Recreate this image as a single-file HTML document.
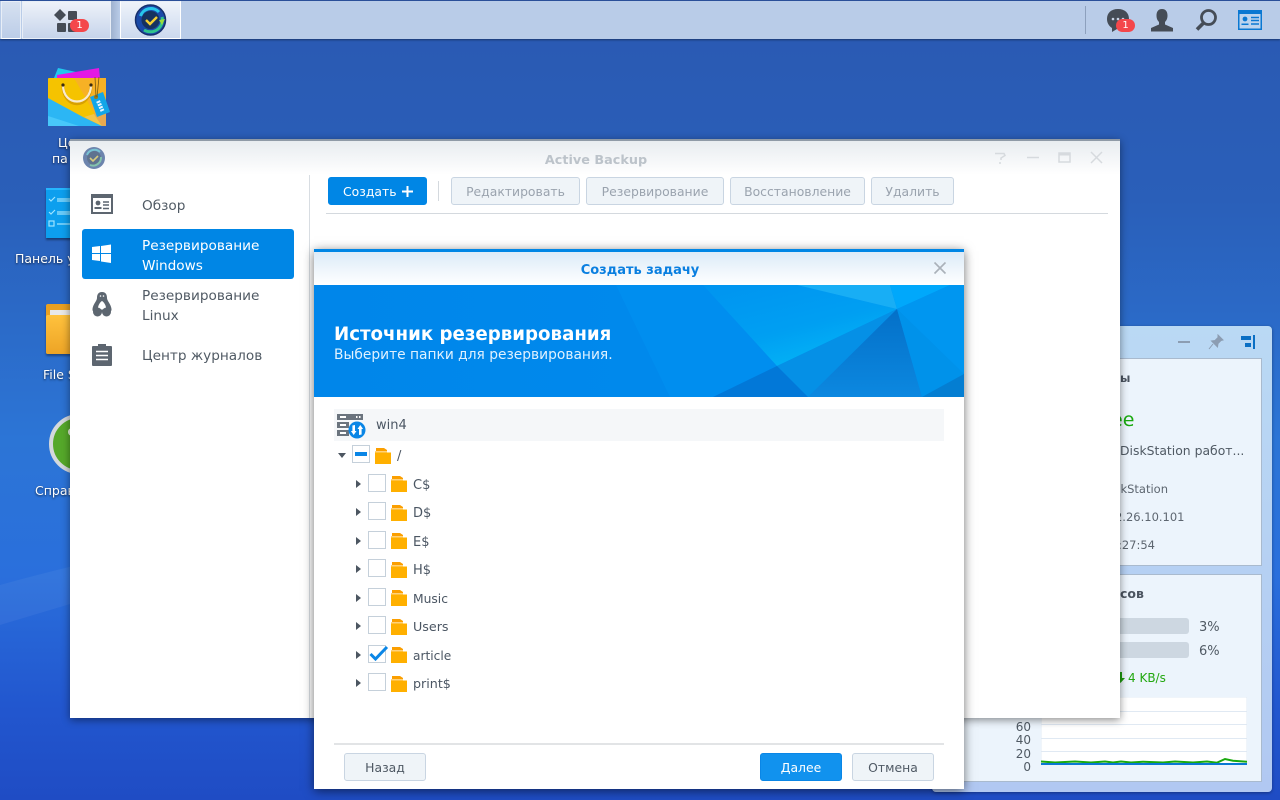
<!DOCTYPE html>
<html><head><meta charset="utf-8"><style>
*{box-sizing:border-box}
html,body{margin:0;padding:0;width:1280px;height:800px;overflow:hidden}
body{position:relative;font-family:"DejaVu Sans","Liberation Sans",sans-serif;background:linear-gradient(180deg,#2a59b2 0,#2a5fb9 25%,#2c75d6 55%,#2a6fdc 72%,#2257cf 88%,#1f4cc4 100%)}
.a{position:absolute}
.t{position:absolute;white-space:nowrap}
svg{position:absolute;display:block}
.btn{position:absolute;top:177px;height:28px;border:1px solid #c9d5e2;border-radius:3px;background:#eff4f8;color:#9aa3ae;font-size:12.4px;line-height:28px;text-align:center;white-space:nowrap}
.dt{color:#fff;font-size:12.5px;text-shadow:0 1px 2px rgba(0,0,0,.7)}
.nav{position:absolute;left:142px;font-size:13.65px;line-height:20px;color:#505a64;white-space:nowrap}
.cb{position:absolute;left:368px;width:18px;height:18px;border:1.5px solid #c5d0da;background:#fff}
.tri{position:absolute;left:356px;width:0;height:0;margin-top:1px;border-left:5px solid #4c5661;border-top:4.5px solid transparent;border-bottom:4.5px solid transparent}
.lab{position:absolute;left:413px;font-size:13px;color:#4b5663;line-height:16px;white-space:nowrap}
.w{position:absolute;color:#505a64;white-space:nowrap}
</style></head><body>

<svg style="left:0;top:0" width="1280" height="800"><path d="M0 585 Q200 530 300 535 L0 625Z" fill="#fff" opacity=".05"/></svg>

<!-- desktop icons -->
<svg style="left:44px;top:64px" width="68" height="68" viewBox="0 0 68 68">
<path d="M10 14 L14 4 L50 12 L50 14Z" fill="#22c8ee"/><path d="M13 11 L55 4 L56 14 L13 14Z" fill="#e418e4"/>
<rect x="4" y="14" width="58" height="48" rx="1" fill="#f5c300"/><path d="M30 14H62V62H58Z" fill="#f7b125"/>
<path d="M4 34L39 53 58 62H4Z" fill="#2cb6f4"/><path d="M4 52L35 62H4Z" fill="#48c8fa"/><path d="M40 53L50 50 58 62Z" fill="#f2c54a"/><path d="M50 50L62 42V62H58Z" fill="#e9a94f"/>
<path d="M19 21C19 46 47 46 47 21" fill="none" stroke="#d8a000" stroke-width="3"/>
<path d="M19 21C19 43 47 43 47 21" fill="none" stroke="#f8ead0" stroke-width="2.2"/>
<circle cx="19" cy="21" r="1.6" fill="#3a2a10"/><circle cx="47" cy="21" r="1.6" fill="#3a2a10"/>
<path d="M46 33L59 28 66 48 53 53Z" fill="#12a6e8"/><circle cx="52" cy="33" r="2" fill="#a07a10"/>
<path d="M51 13l1 20M55 13l-2 20" stroke="#7a5a10" stroke-width=".8" fill="none"/>
<path d="M54 37l4.500 10" stroke="#e5f4ff" stroke-width="4" stroke-dasharray="2 1"/>
</svg>
<div class="t dt" style="left:58px;top:135px">Це</div>
<div class="t dt" style="left:52px;top:151px">па</div>

<div class="a" style="left:46px;top:188px;width:30px;height:50px;background:#0d9fee;border-top:2px solid #25b6ff;box-shadow:0 2px 2px rgba(0,0,0,.4)"></div>
<svg style="left:46px;top:188px" width="24" height="50"><g stroke="#9fe4ff" stroke-width="1.2" fill="none"><path d="M3 11l2 2 4-4M3 24l2 2 4-4M11 11h13M11 13h13M11 24h13M11 26h13M11 36h13"/><rect x="3" y="33" width="5" height="5"/></g></svg>
<div class="t dt" style="left:15px;top:251px">Панель у</div>

<div class="a" style="left:46px;top:304px;width:30px;height:50px;background:linear-gradient(#e89f20,#f0a828);border-radius:2px;box-shadow:0 2px 2px rgba(0,0,0,.35)"></div>
<div class="a" style="left:50px;top:310px;width:20px;height:5px;background:#e8e8e8"></div>
<div class="a" style="left:46px;top:315px;width:30px;height:39px;background:linear-gradient(#ffc23d,#eda426);border-radius:2px"></div>
<div class="t dt" style="left:43px;top:367px">File S</div>

<div class="a" style="left:49px;top:414px;width:60px;height:60px;border-radius:50%;background:#55a82a;border:4px solid #d4d8dc"></div>
<div class="a" style="left:68px;top:428px;width:8px;height:8px;border-radius:50%;background:#e8f3dc"></div>
<div class="t dt" style="left:35px;top:483px">Справ</div>

<!-- taskbar -->
<div class="a" style="left:0;top:0;width:1280px;height:39px;background:#b9cce8;border-top:1px solid #2a4f99;box-shadow:0 1px 2px rgba(0,0,0,.4)"></div>
<div class="a" style="left:1px;top:1px;width:20px;height:38px;background:linear-gradient(#d6e1f0,#bccde8);border:1px solid #e8eef7;border-bottom-color:#fff"></div>
<div class="a" style="left:22px;top:1px;width:89px;height:38px;background:linear-gradient(#eef2f9,#c6d4eb);border:1px solid #e8eef7"></div>
<div class="a" style="left:111px;top:1px;width:9px;height:38px;background:linear-gradient(90deg,#9fb2cf,#b9cce8)"></div>
<div class="a" style="left:120px;top:1px;width:61px;height:38px;background:linear-gradient(#eef3fa,#ccd9ee);border:1px solid #fff;border-top-color:#e8eef7"></div>
<svg style="left:54px;top:9px" width="26" height="24" viewBox="0 0 26 24" fill="#454c56"><path d="M6 0l6 6-6 6-6-6z"/><rect x="14" y="2" width="9" height="9" rx="1"/><rect x="3" y="14" width="9" height="9" rx="1"/><rect x="14" y="14" width="9" height="9" rx="1"/></svg>
<div class="a" style="left:70px;top:19px;width:19px;height:13px;border-radius:7px;background:#f4474b;color:#fff;font-size:10px;line-height:13px;text-align:center">1</div>
<svg style="left:134px;top:3px" width="33" height="33" viewBox="0 0 33 33"><circle cx="16.500" cy="17" r="15" fill="#1a4aa8"/><circle cx="16.500" cy="17" r="15" fill="none" stroke="#16306c" stroke-width="1.500"/><circle cx="16.500" cy="17" r="9" fill="#16325f"/><path d="M6.500 13A11 11 0 0 1 25 9" fill="none" stroke="#28c6ea" stroke-width="3"/><path d="M28 14A12 12 0 0 1 10 27" fill="none" stroke="#30c48c" stroke-width="3"/><path d="M25 17l6-1-3 6z" fill="#9add3c"/><path d="M12 17l4 4 7-7" fill="none" stroke="#f5cf35" stroke-width="2.400"/></svg>

<div class="a" style="left:1085px;top:6px;width:1px;height:28px;background:#8da0bd"></div>
<svg style="left:1106px;top:8px" width="26" height="26" viewBox="0 0 26 26"><path d="M12 1C5 1 1 5 1 11c0 4 2 7 5 9l0 4 5-3h1c7 0 11-4 11-10S19 1 12 1z" fill="#454c56"/><g fill="#c8d4e6"><circle cx="7" cy="11" r="1.300"/><circle cx="12" cy="11" r="1.300"/><circle cx="17" cy="11" r="1.300"/></g></svg>
<div class="a" style="left:1116px;top:19px;width:19px;height:13px;border-radius:7px;background:#f4474b;color:#fff;font-size:10px;line-height:13px;text-align:center">1</div>
<svg style="left:1150px;top:8px" width="24" height="24" viewBox="0 0 24 24" fill="#454c56"><path d="M12 1c-4 0-5.500 3-5.500 6.500 0 3 1 5 2.500 6.500v2.500L1 20v3.500h22V20l-8-3.500V14c1.500-1.500 2.500-3.500 2.500-6.500C17.500 4 16 1 12 1z"/></svg>
<svg style="left:1194px;top:8px" width="25" height="24" viewBox="0 0 25 24"><circle cx="14.500" cy="9.500" r="7" fill="none" stroke="#454c56" stroke-width="2.800"/><path d="M9.500 15l-6.500 6.500" stroke="#454c56" stroke-width="3.600"/></svg>
<svg style="left:1238px;top:10px" width="24" height="20" viewBox="0 0 24 20"><rect x=".75" y=".75" width="22.500" height="18.500" fill="#bcd4ee" stroke="#0a78d2" stroke-width="1.500"/><rect x="1" y="1" width="22" height="3" fill="#0a78d2"/><circle cx="7" cy="9" r="2.400" fill="#0a78d2"/><path d="M3.500 15h7v-1.500h-7z" fill="#0a78d2"/><path d="M13 7.500h8M13 10.500h8M13 14h8" stroke="#0a78d2" stroke-width="1.500"/></svg>

<!-- widget -->
<div class="a" style="left:932px;top:326px;width:340px;height:466px;border-radius:4px;background:linear-gradient(#bad9f4,#b1c8f2);box-shadow:0 1px 3px rgba(0,0,0,.35)"></div>
<div class="a" style="left:1178px;top:341px;width:12px;height:2px;background:#8c9db2"></div>
<svg style="left:1208px;top:334px" width="16" height="16" viewBox="0 0 16 16"><path d="M10 1l5 5-2 .5-3 3-.5 3.500L3.500 7 7 6.500l3-3zM5 10l-4 5" fill="#8c9db2" stroke="#8c9db2"/></svg>
<svg style="left:1241px;top:335px" width="15" height="15"><rect x="0" y="1" width="10" height="4" fill="#0b6fc4"/><rect x="4" y="8" width="6" height="4" fill="#0b6fc4"/><rect x="12" y="0" width="2" height="14" fill="#0b6fc4"/></svg>
<div class="a" style="left:940px;top:358px;width:322px;height:208px;background:#ecf4fc;border:1px solid #a9bace"></div>
<div class="a" style="left:940px;top:574px;width:322px;height:208px;background:#ecf4fc;border:1px solid #a9bace"></div>
<div class="w" style="left:1120px;top:371px;font-size:11.500px;font-weight:bold;color:#4b5460">ы</div>
<div class="w" style="left:1111px;top:409px;font-size:19px;color:#19a90e">ee</div>
<div class="w" style="left:1120px;top:443px;font-size:12.400px">DiskStation работ...</div>
<div class="w" style="right:112px;top:482px;font-size:11.500px;color:#5d6670">skStation</div>
<div class="w" style="right:95.500px;top:510px;font-size:11.500px;color:#5d6670">172.26.10.101</div>
<div class="w" style="right:125px;top:538px;font-size:11.500px;color:#5d6670">:27:54</div>
<div class="w" style="left:1120px;top:586px;font-size:12.500px;font-weight:bold;color:#4b5460">сов</div>
<div class="a" style="left:1100px;top:618px;width:89px;height:16px;border-radius:3px;background:#cdd7e1"></div>
<div class="a" style="left:1100px;top:642px;width:89px;height:16px;border-radius:3px;background:#cdd7e1"></div>
<div class="w" style="left:1199px;top:620px;font-size:13px">3%</div>
<div class="w" style="left:1199px;top:644px;font-size:13px">6%</div>
<div class="w" style="left:1128px;top:671px;font-size:12px;color:#22a80f">4 KB/s</div>
<svg style="left:1117px;top:672px" width="8" height="11"><path d="M2 0h3v6h3L3.500 11 0 6h2z" fill="#1f9c0f"/></svg>
<div class="w" style="left:1000px;top:720px;width:31px;text-align:right;font-size:12px;line-height:14px">60</div>
<div class="w" style="left:1000px;top:733px;width:31px;text-align:right;font-size:12px;line-height:14px">40</div>
<div class="w" style="left:1000px;top:747px;width:31px;text-align:right;font-size:12px;line-height:14px">20</div>
<div class="w" style="left:1000px;top:760px;width:31px;text-align:right;font-size:12px;line-height:14px">0</div>
<svg style="left:1041px;top:697px" width="206" height="68" viewBox="0 0 206 68"><rect width="206" height="67" fill="#fff" stroke="#e2ebf4"/><path d="M0 14.500h206M0 27.500h206M0 41.500h206M0 54.500h206" stroke="#e0e9f3"/><path d="M0 64.500L14 65.500 34 64.500 50 65.500 64 64.500 72 65.500 80 64.500 90 65.500 102 64.700 122 65.500 134 64.500 152 65.500 166 64.500 176 65.700 184 62 192 63.700 206 64.700" fill="none" stroke="#19a90e" stroke-width="2"/><path d="M0 67h206" stroke="#0a78d2" stroke-width="2"/></svg>

<!-- main window -->
<div class="a" style="left:70px;top:139px;width:1050px;height:579px;background:#fff;box-shadow:0 2px 8px rgba(0,0,0,.45)"></div>
<div class="a" style="left:70px;top:139px;width:1050px;height:36px;background:linear-gradient(#e8ecf0,#fff);border-top:2px solid #8f9aa7"></div>
<svg style="left:83px;top:147px" width="22" height="22" viewBox="0 0 22 22"><circle cx="11" cy="11" r="11" fill="#6c84ad"/><circle cx="11" cy="11" r="7" fill="#5f738f"/><path d="M4 8A8 8 0 0 1 17 5" fill="none" stroke="#78c3d4" stroke-width="2"/><path d="M18 10A8 8 0 0 1 7 18" fill="none" stroke="#84c4ac" stroke-width="2"/><path d="M7 11l3 3 5-5" fill="none" stroke="#d8cb7d" stroke-width="1.600"/></svg>
<div class="t" style="left:71px;width:1050px;top:153px;text-align:center;font-size:12.800px;font-weight:bold;color:#bcc3ca">Active Backup</div>
<svg style="left:994px;top:151px" width="112" height="14" fill="none" stroke="#d6dade" stroke-width="1.500"><path d="M1 2.500h9l1 2-4 2.500v2M6 11v2"/><path d="M33 6.500h12"/><rect x="65" y="2" width="11" height="9" stroke-width="1.500"/><path d="M65 3h11" stroke-width="3"/><path d="M97 1l11 11M108 1L97 12"/></svg>

<div class="a" style="left:309px;top:175px;width:1px;height:543px;background:#d8dde2"></div>
<svg style="left:91px;top:194px" width="22" height="20" viewBox="0 0 22 20"><rect x="1" y="1" width="20" height="18" fill="none" stroke="#5d6670" stroke-width="2"/><rect x="1" y="1" width="20" height="3" fill="#5d6670"/><circle cx="7" cy="9" r="2.400" fill="#5d6670"/><path d="M3.500 15h7v-2h-7z" fill="#5d6670"/><path d="M12 8h6M12 11h6M12 14.500h6" stroke="#5d6670" stroke-width="1.500"/></svg>
<div class="nav" style="top:196px">Обзор</div>
<div class="a" style="left:82px;top:229px;width:212px;height:50px;background:#0086e5;border-radius:3px"></div>
<svg style="left:92px;top:244px" width="19" height="20" fill="#fff"><path d="M0 3l8-1v7H0zM9 2l10-1.500V9H9zM0 10h8v7l-8-1zM9 10h10v9L9 17.500z"/></svg>
<div class="nav" style="top:236px;color:#fff">Резервирование<br>Windows</div>
<svg style="left:92px;top:292px" width="20" height="25" viewBox="0 0 20 25"><path d="M10 0C6 0 5 3 5 6 5 9 1 12 .5 17c-.2 2 1 3 2.500 3h14c1.500 0 2.700-1 2.500-3C19 12 15 9 15 6 15 3 14 0 10 0z" fill="#5d6670"/><path d="M10 9C8 10 5.500 14 6 17.500h8C14.500 14 12 10 10 9z" fill="#fff"/><circle cx="5.500" cy="20" r="4.500" fill="#5d6670"/><circle cx="14.500" cy="20" r="4.500" fill="#5d6670"/><circle cx="8.500" cy="4" r=".8" fill="#fff"/><circle cx="11.500" cy="4" r=".8" fill="#fff"/></svg>
<div class="nav" style="top:286px">Резервирование<br>Linux</div>
<svg style="left:92px;top:343px" width="20" height="23" viewBox="0 0 20 23"><path d="M1 3h5V1h8v2h5a1 1 0 0 1 1 1v18a1 1 0 0 1-1 1H1a1 1 0 0 1-1-1V4a1 1 0 0 1 1-1z" fill="#5d6670"/><path d="M4 8.500h12M4 12.500h12M4 16.500h12" stroke="#fff" stroke-width="1.500"/></svg>
<div class="nav" style="top:346px">Центр журналов</div>

<div class="btn" style="left:328px;width:99px;background:#0086e5;border-color:#0086e5;color:#fff;text-align:left;padding-left:14px">Создать</div>
<svg style="left:401px;top:185px" width="13" height="13"><path d="M6.500 1v11M1 6.500h11" stroke="#fff" stroke-width="2"/></svg>
<div class="a" style="left:438px;top:181px;width:1px;height:20px;background:#d4d9de"></div>
<div class="btn" style="left:451px;width:129px">Редактировать</div>
<div class="btn" style="left:586px;width:138px">Резервирование</div>
<div class="btn" style="left:730px;width:135px">Восстановление</div>
<div class="btn" style="left:871px;width:83px">Удалить</div>
<div class="a" style="left:326px;top:213px;width:782px;height:1px;background:#d4d9de"></div>

<!-- dialog -->
<div class="a" style="left:314px;top:249px;width:650px;height:540px;background:#fff;box-shadow:0 2px 10px rgba(0,0,0,.55)"></div>
<div class="a" style="left:314px;top:249px;width:650px;height:36px;background:linear-gradient(#dcebf8,#fff);border-top:3px solid #0086e5"></div>
<div class="t" style="left:315px;width:650px;top:263px;text-align:center;font-size:13px;font-weight:bold;color:#0a7fe0">Создать задачу</div>
<svg style="left:933px;top:261px" width="14" height="14"><path d="M1.500 1.500l11 11M12.500 1.500l-11 11" stroke="#aab1b9" stroke-width="1.600"/></svg>
<svg style="left:314px;top:285px" width="650" height="112" viewBox="0 0 650 112">
<defs><linearGradient id="g" x1="0" y1="0" x2="1" y2="0"><stop offset="0" stop-color="#0086ea"/><stop offset="1" stop-color="#008cee"/></linearGradient>
<linearGradient id="h" x1="0" y1="0" x2=".6" y2="1"><stop offset="0" stop-color="#0094f0"/><stop offset=".6" stop-color="#009ff2"/><stop offset="1" stop-color="#03b4f6"/></linearGradient>
<linearGradient id="k" x1="0" y1="0" x2="0" y2="1"><stop offset="0" stop-color="#0470c8"/><stop offset="1" stop-color="#0c88e0"/></linearGradient></defs>
<rect width="650" height="112" fill="url(#g)"/>
<path d="M302 0H389L463 81 399 112H356Z" fill="#008eef"/>
<path d="M389 0H483L583 24 463 81Z" fill="url(#h)"/>
<path d="M483 0H576L583 24Z" fill="#18aef5"/>
<path d="M576 0H636L583 24Z" fill="#00a8fb"/>
<path d="M636 0H650V89L583 24Z" fill="#0096f0"/>
<path d="M463 81L583 24 494 112Z" fill="#0590e6"/>
<path d="M463 81L494 112H399Z" fill="#0278d8"/>
<path d="M583 24L494 112H608Z" fill="url(#k)"/>
<path d="M583 24L608 112 650 89Z" fill="#0092ea"/>
<path d="M650 89L608 112H650Z" fill="#047ed2"/>
</svg>
<div class="t" style="left:334px;top:324px;font-size:18.200px;font-weight:bold;color:#fff;line-height:22px">Источник резервирования</div>
<div class="t" style="left:334px;top:347px;font-size:13.800px;color:#dff1ff;line-height:16px">Выберите папки для резервирования.</div>

<div class="a" style="left:334px;top:409px;width:610px;height:32px;background:#f5f7f9"></div>
<svg style="left:337px;top:413px" width="29" height="26" viewBox="0 0 29 26"><g fill="#6b747e"><rect x="0" y="1" width="26" height="6"/><rect x="0" y="9" width="12" height="6"/><rect x="0" y="17" width="12" height="6"/></g><g fill="#fff"><rect x="3" y="3" width="6" height="2"/><rect x="3" y="11" width="6" height="2"/><rect x="3" y="19" width="6" height="2"/><rect x="19" y="3" width="1.500" height="2"/><rect x="22" y="3" width="1.500" height="2"/></g><circle cx="20" cy="17" r="8.500" fill="#0a86e6"/><path d="M18 12v6h1.500l-2.800 4-2.800-4h1.500v-5.500zM22 22v-6h-1.500l2.800-4 2.800 4h-1.500v5.500z" fill="#fff"/></svg>
<div class="lab" style="left:376px;top:418px">win4</div>

<div class="a" style="left:338px;top:453px;width:0;height:0;border-top:5px solid #4c5661;border-left:4.500px solid transparent;border-right:4.500px solid transparent"></div>
<div class="cb" style="left:352px;top:445px"></div><div class="a" style="left:355px;top:452px;width:12px;height:4px;background:#0a86e6"></div>
<svg style="left:375px;top:448px" width="16" height="16"><path d="M1 0h8l3 2v1H1z" fill="#fb9f00"/><rect x="0" y="3" width="12" height="1.500" fill="#ffd27a"/><rect x="0" y="4.500" width="16" height="11.500" fill="#ffb000"/></svg>
<div class="lab" style="left:397px;top:449px">/</div>

<div class="tri" style="top:479px"></div><div class="cb" style="top:474px"></div><svg style="left:391px;top:476px" width="16" height="16"><path d="M1 0h8l3 2v1H1z" fill="#fb9f00"/><rect x="0" y="3" width="12" height="1.500" fill="#ffd27a"/><rect x="0" y="4.500" width="16" height="11.500" fill="#ffb000"/></svg><div class="lab" style="top:478px">C$</div>
<div class="tri" style="top:507px"></div><div class="cb" style="top:502px"></div><svg style="left:391px;top:505px" width="16" height="16"><path d="M1 0h8l3 2v1H1z" fill="#fb9f00"/><rect x="0" y="3" width="12" height="1.500" fill="#ffd27a"/><rect x="0" y="4.500" width="16" height="11.500" fill="#ffb000"/></svg><div class="lab" style="top:506px">D$</div>
<div class="tri" style="top:536px"></div><div class="cb" style="top:531px"></div><svg style="left:391px;top:533px" width="16" height="16"><path d="M1 0h8l3 2v1H1z" fill="#fb9f00"/><rect x="0" y="3" width="12" height="1.500" fill="#ffd27a"/><rect x="0" y="4.500" width="16" height="11.500" fill="#ffb000"/></svg><div class="lab" style="top:535px">E$</div>
<div class="tri" style="top:564px"></div><div class="cb" style="top:559px"></div><svg style="left:391px;top:562px" width="16" height="16"><path d="M1 0h8l3 2v1H1z" fill="#fb9f00"/><rect x="0" y="3" width="12" height="1.500" fill="#ffd27a"/><rect x="0" y="4.500" width="16" height="11.500" fill="#ffb000"/></svg><div class="lab" style="top:563px">H$</div>
<div class="tri" style="top:593px"></div><div class="cb" style="top:588px"></div><svg style="left:391px;top:590px" width="16" height="16"><path d="M1 0h8l3 2v1H1z" fill="#fb9f00"/><rect x="0" y="3" width="12" height="1.500" fill="#ffd27a"/><rect x="0" y="4.500" width="16" height="11.500" fill="#ffb000"/></svg><div class="lab" style="top:591px;font-size:12.300px">Music</div>
<div class="tri" style="top:621px"></div><div class="cb" style="top:616px"></div><svg style="left:391px;top:619px" width="16" height="16"><path d="M1 0h8l3 2v1H1z" fill="#fb9f00"/><rect x="0" y="3" width="12" height="1.500" fill="#ffd27a"/><rect x="0" y="4.500" width="16" height="11.500" fill="#ffb000"/></svg><div class="lab" style="top:619px;font-size:12.700px">Users</div>
<div class="tri" style="top:650px"></div><div class="cb" style="top:645px"></div><svg style="left:391px;top:647px" width="16" height="16"><path d="M1 0h8l3 2v1H1z" fill="#fb9f00"/><rect x="0" y="3" width="12" height="1.500" fill="#ffd27a"/><rect x="0" y="4.500" width="16" height="11.500" fill="#ffb000"/></svg><div class="lab" style="top:648px;font-size:12.200px">article</div>
<svg style="left:369px;top:645px" width="20" height="18"><path d="M1.500 9l5 5L18 2" fill="none" stroke="#0a86e6" stroke-width="3"/></svg>
<div class="tri" style="top:678px"></div><div class="cb" style="top:673px"></div><svg style="left:391px;top:676px" width="16" height="16"><path d="M1 0h8l3 2v1H1z" fill="#fb9f00"/><rect x="0" y="3" width="12" height="1.500" fill="#ffd27a"/><rect x="0" y="4.500" width="16" height="11.500" fill="#ffb000"/></svg><div class="lab" style="top:676px;font-size:12.700px">print$</div>

<div class="a" style="left:334px;top:743px;width:610px;height:2px;background:#e2e4e6"></div>
<div class="btn" style="left:344px;top:753px;width:82px;color:#4f5964">Назад</div>
<div class="btn" style="left:760px;top:753px;width:82px;background:#1192ee;border-color:#0a86e6;color:#fff">Далее</div>
<div class="btn" style="left:852px;top:753px;width:82px;color:#4f5964">Отмена</div>
</body></html>
